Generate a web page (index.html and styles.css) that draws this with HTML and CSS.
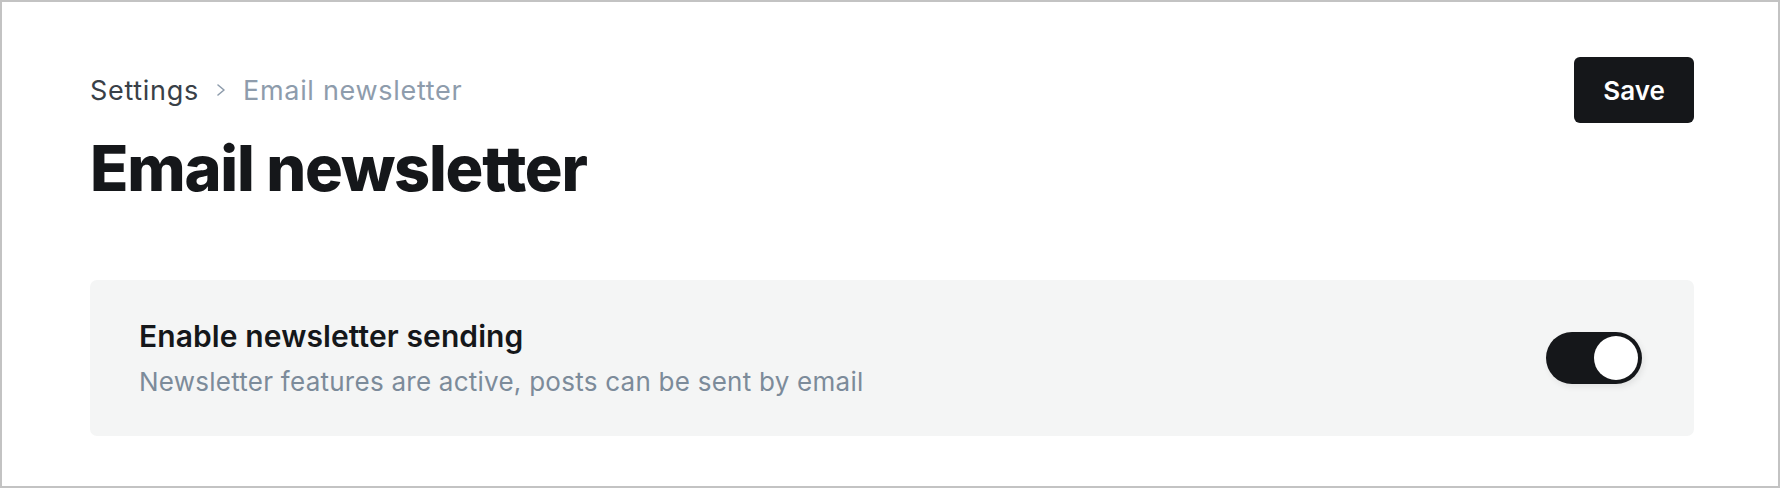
FILE: index.html
```html
<!DOCTYPE html>
<html lang="en">
<head>
  <meta charset="UTF-8">
  <title>Email newsletter</title>
  <link rel="stylesheet" href="styles.css">
</head>
<body>
  <div class="frame">
    <header class="topbar">
      <nav class="crumbs">
        <span class="crumb-root">Settings</span>
        <svg class="chevron" width="12" height="16" viewBox="0 0 12 16">
          <polyline points="3,3 9,8 3,13" fill="none" stroke="#8e9cac" stroke-width="1.6" stroke-linecap="round" stroke-linejoin="round"/>
        </svg>
        <span class="crumb-current">Email newsletter</span>
      </nav>
      <button class="save">Save</button>
    </header>

    <h1 class="title">Email newsletter</h1>

    <!-- newsletter toggle card -->
    <section class="card">
      <div class="card-text">
        <h2 class="card-title">Enable newsletter sending</h2>
        <p class="card-desc">Newsletter features are active, posts can be sent by email</p>
      </div>
      <div class="toggle on"><span class="knob"></span></div>
    </section>
  </div>
</body>
</html>
```

FILE: styles.css
```css
* {
  box-sizing: border-box;
}

body {
  margin: 0;
  background-color: #fff;
  font-family: Inter, "Noto Sans", sans-serif;
  color: #15171a;
}

.frame {
  height: 488px;
  border: 2px solid #c3c3c3;
  padding: 55px 84px 0 88px;
}

.topbar {
  display: flex;
  align-items: center;
  justify-content: space-between;
}

.crumbs {
  display: flex;
  align-items: center;
  gap: 16px;
  font-size: 27px;
  letter-spacing: 0.7px;
}

.crumb-root {
  color: #394047;
}

.crumb-current {
  color: #8e9cac;
}

.chevron {
  display: block;
}

.save {
  font-family: inherit;
  font-size: 26px;
  font-weight: 600;
  color: #fff;
  background-color: #15171a;
  border: none;
  border-radius: 6px;
  width: 120px;
  height: 66px;
}

.title {
  margin: 8px 0 0;
  font-size: 63px;
  font-weight: 800;
  letter-spacing: -1.2px;
  line-height: 1.2;
}

.card {
  margin-top: 73px;
  height: 156px;
  background-color: #f4f5f5;
  border-radius: 7px;
  padding: 0 52px 0 49px;
  display: flex;
  align-items: center;
  justify-content: space-between;
}

.card-title {
  margin: 0;
  font-size: 30px;
  font-weight: 600;
  letter-spacing: 0.1px;
  line-height: 1.2;
}

.card-desc {
  margin: 12px 0 0;
  font-size: 26px;
  letter-spacing: 0.25px;
  line-height: 1.2;
  color: #7c8b9a;
}

.toggle {
  width: 96px;
  height: 52px;
  border-radius: 26px;
  background-color: #15171a;
  padding: 4px;
  display: flex;
  justify-content: flex-end;
  box-shadow: 2px 3px 6px rgba(0, 0, 0, 0.08);
}

.knob {
  width: 44px;
  height: 44px;
  border-radius: 50%;
  background-color: #fff;
}
```
